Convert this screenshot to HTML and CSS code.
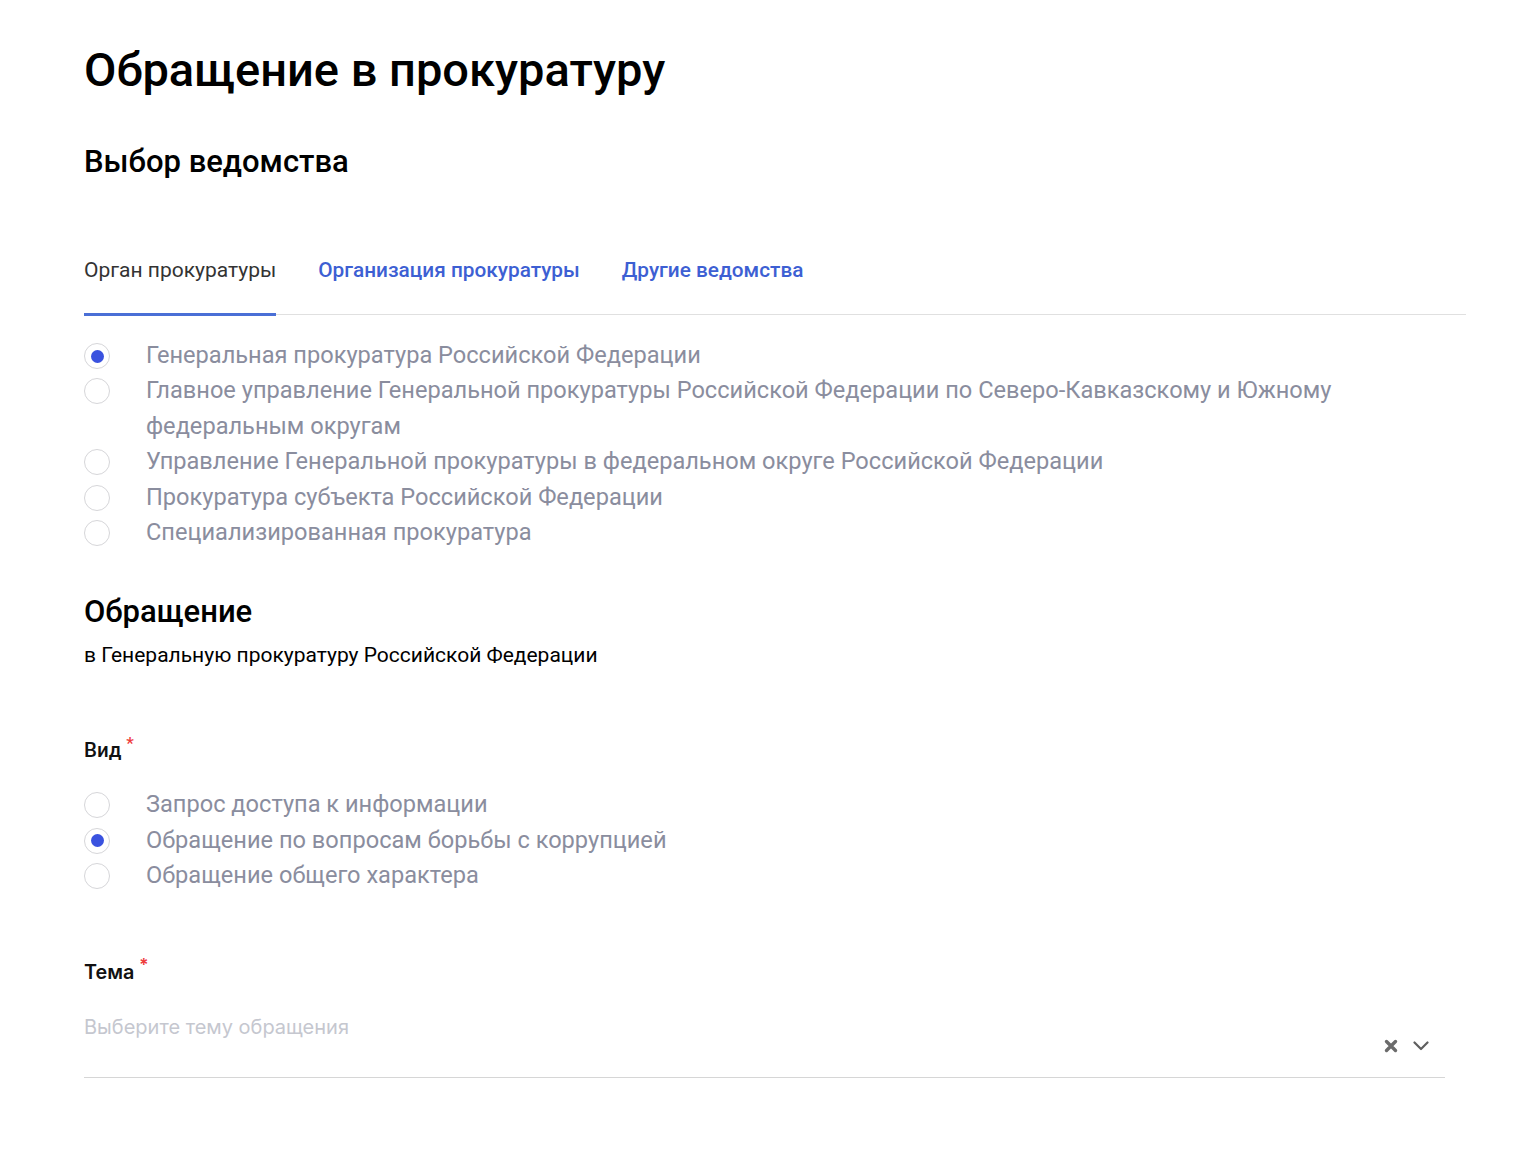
FILE: index.html
```html
<!DOCTYPE html>
<html lang="ru">
<head>
<meta charset="utf-8">
<title>Обращение в прокуратуру</title>
<link rel="stylesheet" href="styles.css">
</head>
<body>
<main class="page">
  <h1 class="title">Обращение в прокуратуру</h1>
  <h2 class="section-title">Выбор ведомства</h2>

  <nav class="tabs">
    <span class="tab tab-active">Орган прокуратуры</span>
    <span class="tab">Организация прокуратуры</span>
    <span class="tab">Другие ведомства</span>
  </nav>

  <ul class="radios radios-org">
    <li class="radio-row"><span class="radio checked"></span><span class="radio-text">Генеральная прокуратура Российской Федерации</span></li>
    <li class="radio-row"><span class="radio"></span><span class="radio-text">Главное управление Генеральной прокуратуры Российской Федерации по Северо-Кавказскому и Южному федеральным округам</span></li>
    <li class="radio-row"><span class="radio"></span><span class="radio-text">Управление Генеральной прокуратуры в федеральном округе Российской Федерации</span></li>
    <li class="radio-row"><span class="radio"></span><span class="radio-text">Прокуратура субъекта Российской Федерации</span></li>
    <li class="radio-row"><span class="radio"></span><span class="radio-text">Специализированная прокуратура</span></li>
  </ul>

  <h2 class="section-title appeal-title">Обращение</h2>
  <p class="appeal-sub">в Генеральную прокуратуру Российской Федерации</p>

  <div class="field-label kind-label">Вид<span class="req">*</span></div>
  <ul class="radios radios-kind">
    <li class="radio-row"><span class="radio"></span><span class="radio-text">Запрос доступа к информации</span></li>
    <li class="radio-row"><span class="radio checked"></span><span class="radio-text">Обращение по вопросам борьбы с коррупцией</span></li>
    <li class="radio-row"><span class="radio"></span><span class="radio-text">Обращение общего характера</span></li>
  </ul>

  <div class="field-label theme-label">Тема<span class="req">*</span></div>
  <div class="select">
    <span class="placeholder">Выберите тему обращения</span>
    <span class="select-icons">
      <svg class="icon-clear" width="14" height="14" viewBox="0 0 14 14"><path d="M2.5 2.5 L11.5 11.5 M11.5 2.5 L2.5 11.5" stroke="#6b6b6b" stroke-width="3.4" stroke-linecap="round"/></svg>
      <svg class="icon-chevron" width="16" height="10" viewBox="0 0 16 10"><path d="M1.5 1.5 L8 8 L14.5 1.5" fill="none" stroke="#5f5f5f" stroke-width="2.2" stroke-linecap="round" stroke-linejoin="round"/></svg>
    </span>
  </div>
</main>
</body>
</html>
```

FILE: styles.css
```css
* { box-sizing: border-box; }

html, body {
  margin: 0;
  padding: 0;
  background: #ffffff;
}

body {
  font-family: Roboto, "Liberation Sans", sans-serif;
  color: #000;
}

.page {
  padding: 42px 54px 0 84px;
}

.title {
  margin: 0;
  font-size: 47px;
  line-height: 56px;
  font-weight: 500;
}

.section-title {
  margin: 47px 0 0;
  font-size: 31px;
  line-height: 34px;
  font-weight: 500;
}

.tabs {
  display: flex;
  gap: 42px;
  margin-top: 79px;
  border-bottom: 1px solid #e0e0e0;
}

.tab {
  font-size: 20.8px;
  line-height: 24px;
  padding-bottom: 31px;
  color: #3d5fd3;
  font-weight: 500;
  border-bottom: 3px solid transparent;
  margin-bottom: -2px;
}

.tab-active {
  color: #333333;
  font-size: 21px;
  font-weight: 400;
  border-bottom-color: #4a6fd6;
}

.radios {
  list-style: none;
  margin: 0;
  padding: 0;
}

.radios-org {
  margin-top: 23px;
  padding-right: 120px;
}

.radio-row {
  display: flex;
  align-items: flex-start;
  gap: 36px;
  font-size: 23.6px;
  line-height: 35.4px;
  color: #8a8d9e;
}

.radio {
  flex: 0 0 26px;
  width: 26px;
  height: 26px;
  margin-top: 5px;
  border: 1px solid #d6d6d9;
  border-radius: 50%;
  display: flex;
  align-items: center;
  justify-content: center;
  background: #fff;
}

.radio.checked::after {
  content: "";
  width: 13px;
  height: 13px;
  border-radius: 50%;
  background: #3a52df;
}

.appeal-title {
  margin-top: 45px;
}

.appeal-sub {
  margin: 13px 0 0;
  font-size: 21px;
  line-height: 26px;
}

.field-label {
  font-size: 20.5px;
  line-height: 26px;
  font-weight: 500;
  color: #111;
}

.req {
  color: #ee3b3b;
  font-size: 17px;
  vertical-align: top;
  position: relative;
  top: -7px;
  margin-left: 5px;
}

.kind-label {
  margin-top: 69px;
}

.radios-kind {
  margin-top: 24px;
}

.theme-label {
  margin-top: 65px;
  font-family: Inter, Roboto, sans-serif;
  font-weight: 600;
  font-size: 19.8px;
}

.select {
  margin-top: 30px;
  margin-right: 21px;
  border-bottom: 1px solid #d6d6d6;
  display: flex;
  justify-content: space-between;
  align-items: flex-end;
  padding-bottom: 24px;
  height: 63px;
}

.placeholder {
  align-self: flex-start;
  font-family: Inter, Roboto, sans-serif;
  font-size: 20px;
  line-height: 24px;
  color: #c5c7cf;
}

.select-icons {
  display: flex;
  align-items: center;
  gap: 15px;
  margin-right: 16px;
}
```
